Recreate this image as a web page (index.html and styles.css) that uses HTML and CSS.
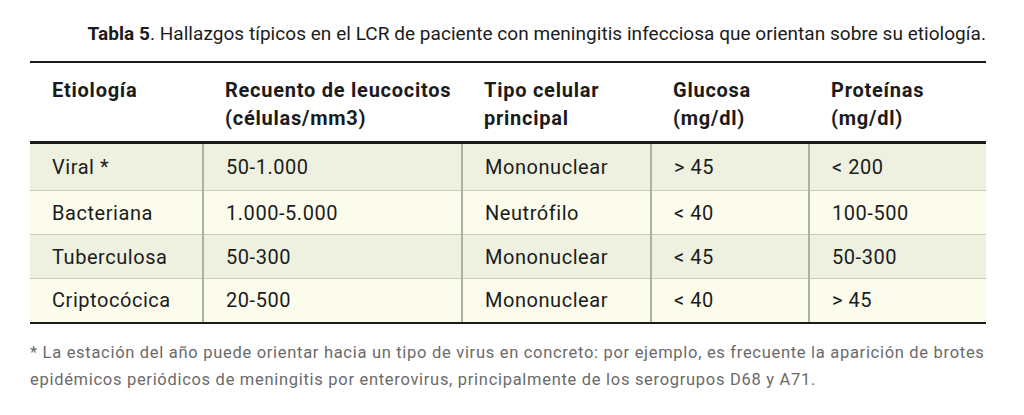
FILE: index.html
```html
<!DOCTYPE html>
<html lang="es">
<head>
<meta charset="utf-8">
<title>Tabla 5</title>
<link rel="stylesheet" href="styles.css">
</head>
<body>
<div class="wrap">
  <p class="caption"><b>Tabla 5</b>. Hallazgos típicos en el LCR de paciente con meningitis infecciosa que orientan sobre su etiología.</p>
  <table class="data">
    <colgroup>
      <col class="c1"><col class="c2"><col class="c3"><col class="c4"><col class="c5">
    </colgroup>
    <thead>
      <tr>
        <th>Etiología</th>
        <th>Recuento de leucocitos<br>(células/mm3)</th>
        <th>Tipo celular<br>principal</th>
        <th>Glucosa<br>(mg/dl)</th>
        <th>Proteínas<br>(mg/dl)</th>
      </tr>
    </thead>
    <tbody>
      <tr class="odd first">
        <td>Viral *</td><td>50-1.000</td><td>Mononuclear</td><td>&gt; 45</td><td>&lt; 200</td>
      </tr>
      <tr class="even">
        <td>Bacteriana</td><td>1.000-5.000</td><td>Neutrófilo</td><td>&lt; 40</td><td>100-500</td>
      </tr>
      <tr class="odd">
        <td>Tuberculosa</td><td>50-300</td><td>Mononuclear</td><td>&lt; 45</td><td>50-300</td>
      </tr>
      <tr class="even">
        <td>Criptocócica</td><td>20-500</td><td>Mononuclear</td><td>&lt; 40</td><td>&gt; 45</td>
      </tr>
    </tbody>
  </table>
  <p class="note">* La estación del año puede orientar hacia un tipo de virus en concreto: por ejemplo, es frecuente la aparición de brotes epidémicos periódicos de meningitis por enterovirus, principalmente de los serogrupos D68 y A71.</p>
</div>
</body>
</html>
```

FILE: styles.css
```css
html, body {
  margin: 0;
  padding: 0;
  background: #ffffff;
}

body {
  font-family: Roboto, "Noto Sans", "Liberation Sans", sans-serif;
  color: #1b1b1b;
}

.wrap {
  width: 956px;
  margin-left: 30px;
  padding-top: 22px;
}

.caption {
  margin: 0;
  text-align: right;
  font-size: 19px;
  letter-spacing: 0.04px;
  line-height: 24px;
  color: #1b1b1b;
}

.caption b {
  font-weight: 700;
}

.data {
  margin-top: 15px;
  width: 956px;
  border-collapse: collapse;
  table-layout: fixed;
  font-size: 20px;
}

.c1 { width: 173px; }
.c2 { width: 259px; }
.c3 { width: 189px; }
.c4 { width: 158px; }
.c5 { width: 177px; }

.data thead tr {
  border-top: 2px solid #1b1b1b;
  border-bottom: 3px solid #1b1b1b;
}

.data th {
  text-align: left;
  vertical-align: top;
  font-weight: 700;
  white-space: nowrap;
  letter-spacing: 0.75px;
  line-height: 28px;
  padding: 13px 22px 9px;
}

.data td {
  height: 44px;
  box-sizing: border-box;
  padding: 0 22px;
  vertical-align: middle;
  line-height: 24px;
  letter-spacing: 0.55px;
  border-left: 2px solid #aeb0a4;
  border-bottom: 1px solid #c8cbb8;
}

.data td:first-child {
  border-left: none;
}

.data tr.first td {
  height: 48px;
}

.data tbody tr:last-child td {
  border-bottom: 2px solid #1b1b1b;
}

.odd { background: #eef1df; }
.even { background: #fcfcec; }

.note {
  margin: 15px 0 0;
  font-size: 16.5px;
  letter-spacing: 0.7px;
  line-height: 27px;
  color: #6a6a6a;
}
```
